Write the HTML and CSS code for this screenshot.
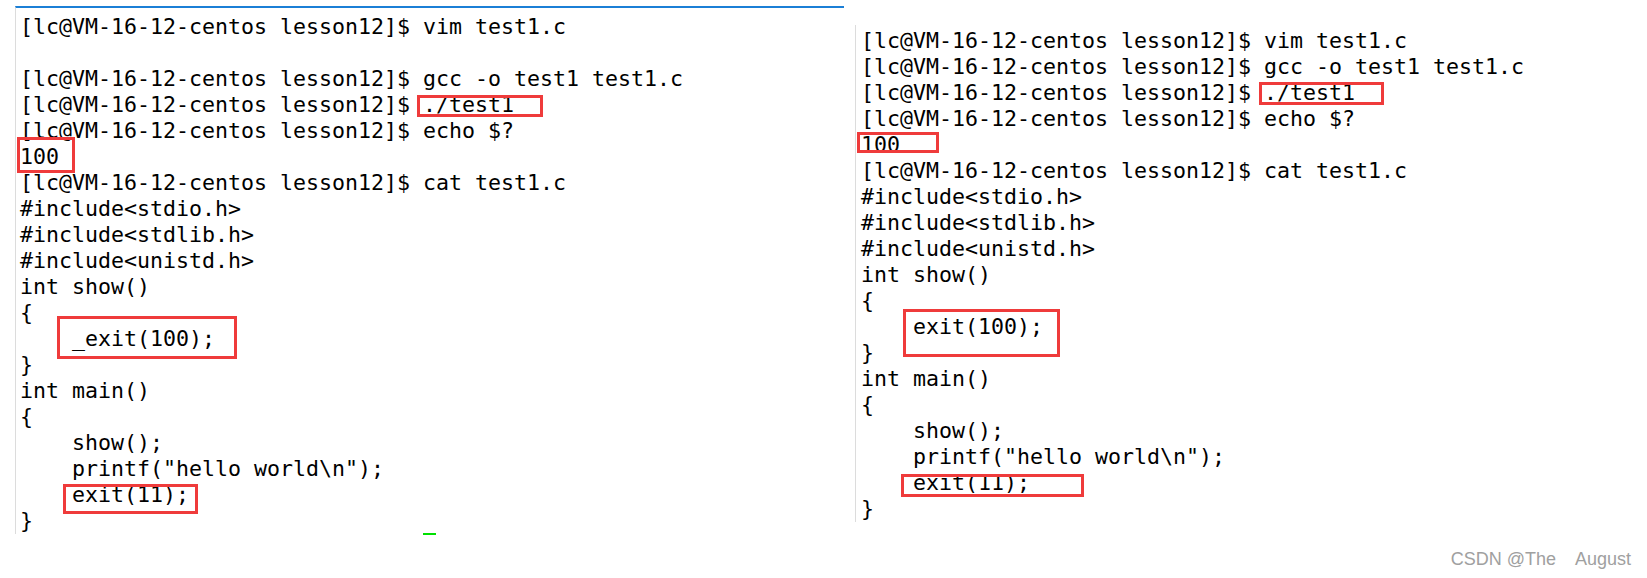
FILE: index.html
```html
<!DOCTYPE html>
<html>
<head>
<meta charset="utf-8">
<title>exit vs _exit</title>
<link rel="stylesheet" href="styles.css">
</head>
<body>
<div class="page">
  <div class="panel panel-left">
<pre class="term">[lc@VM-16-12-centos lesson12]$ vim test1.c

[lc@VM-16-12-centos lesson12]$ gcc -o test1 test1.c
[lc@VM-16-12-centos lesson12]$ ./test1
[lc@VM-16-12-centos lesson12]$ echo $?
100
[lc@VM-16-12-centos lesson12]$ cat test1.c
#include&lt;stdio.h&gt;
#include&lt;stdlib.h&gt;
#include&lt;unistd.h&gt;
int show()
{
    _exit(100);
}
int main()
{
    show();
    printf("hello world\n");
    exit(11);
}</pre>
    <span class="mark l-run"></span>
    <span class="mark l-code"></span>
    <span class="mark l-exit"></span>
    <span class="mark l-exit11"></span>
    <span class="cursor"></span>
  </div>
  <div class="panel panel-right">
<pre class="term">[lc@VM-16-12-centos lesson12]$ vim test1.c
[lc@VM-16-12-centos lesson12]$ gcc -o test1 test1.c
[lc@VM-16-12-centos lesson12]$ ./test1
[lc@VM-16-12-centos lesson12]$ echo $?
100
[lc@VM-16-12-centos lesson12]$ cat test1.c
#include&lt;stdio.h&gt;
#include&lt;stdlib.h&gt;
#include&lt;unistd.h&gt;
int show()
{
    exit(100);
}
int main()
{
    show();
    printf("hello world\n");
    exit(11);
}</pre>
    <span class="mark r-run"></span>
    <span class="mark r-code"></span>
    <span class="mark r-exit"></span>
    <span class="mark r-exit11"></span>
  </div>
</div>
<div class="watermark">CSDN @The    August</div>
</body>
</html>
```

FILE: styles.css
```css
html, body {
  margin: 0;
  padding: 0;
  background: #ffffff;
}

body {
  width: 1647px;
  height: 578px;
  position: relative;
  overflow: hidden;
}

.page {
  display: flex;
  align-items: flex-start;
}

.panel {
  position: relative;
  box-sizing: border-box;
}

.panel-left {
  margin-left: 15px;
  margin-top: 6px;
  width: 829px;
  height: 528px;
  border-top: 2px solid #1b7fd6;
  border-left: 1px solid #dcdcdc;
  padding: 5.5px 0 0 4px;
}

.panel-right {
  margin-left: 11px;
  margin-top: 25px;
  width: 760px;
  height: 497px;
  border-left: 1px solid #dcdcdc;
  padding: 2.5px 0 0 5px;
}

.term {
  margin: 0;
  font-family: "DejaVu Sans Mono", "Liberation Mono", monospace;
  font-size: 21.6px;
  line-height: 26px;
  color: #000000;
  white-space: pre;
}

.mark {
  position: absolute;
  box-sizing: border-box;
  border: 3px solid #ef3b3b;
}

/* left panel annotations (relative to padding box at 16,8) */
.l-run   { left: 401px; top: 87px;  width: 126px; height: 22px; }
.l-code  { left: 1px;   top: 129px; width: 58px;  height: 36px; }
.l-exit  { left: 41px;  top: 308px; width: 180px; height: 43px; }
.l-exit11{ left: 47px;  top: 476px; width: 135px; height: 30px; }

.cursor {
  position: absolute;
  left: 407px;
  top: 525px;
  width: 13px;
  height: 2px;
  background: #00e000;
}

/* right panel annotations (relative to padding box at 856,25) */
.r-run   { left: 403px; top: 57px;  width: 125px; height: 23px; }
.r-code  { left: 1px;   top: 107px; width: 82px;  height: 21px; }
.r-exit  { left: 47px;  top: 284px; width: 157px; height: 48px; }
.r-exit11{ left: 45px;  top: 449px; width: 183px; height: 23px; }

.watermark {
  position: absolute;
  right: 16px;
  top: 549px;
  font-family: "Liberation Sans", Arial, sans-serif;
  font-size: 18px;
  line-height: 20px;
  color: #a0a0a0;
  white-space: pre;
}
```
